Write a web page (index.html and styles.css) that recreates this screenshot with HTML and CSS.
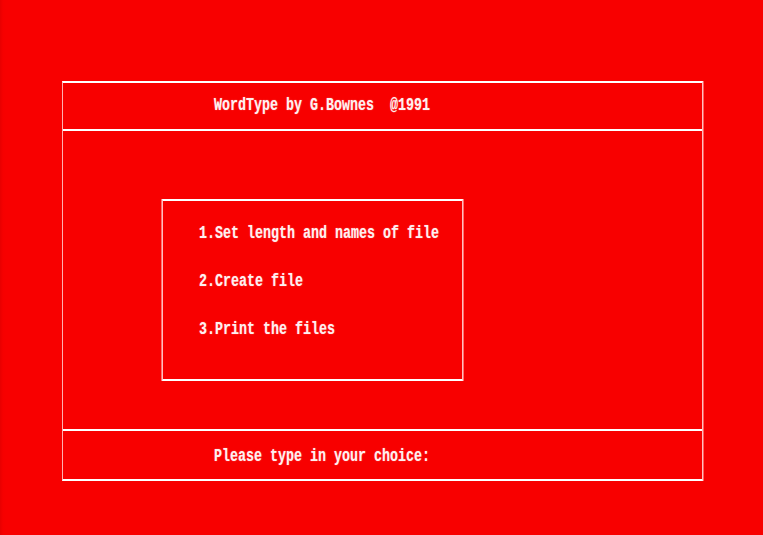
FILE: index.html
```html
<!DOCTYPE html>
<html>
<head>
<meta charset="utf-8">
<link rel="stylesheet" href="styles.css">
</head>
<body>
<div class="screen">
  <div class="frame">
    <div class="header"><span class="txt">WordType by G.Bownes  @1991</span></div>
    <div class="middle">
      <div class="menu">
        <div class="item"><span class="txt">1.Set length and names of file</span></div>
        <div class="item"><span class="txt">2.Create file</span></div>
        <div class="item"><span class="txt">3.Print the files</span></div>
      </div>
    </div>
    <div class="footer"><span class="txt">Please type in your choice:</span></div>
  </div>
</div>
</body>
</html>
```

FILE: styles.css
```css
html, body {
  margin: 0;
  padding: 0;
  background: #f80000;
}
.screen {
  width: 763px;
  height: 535px;
  padding-top: 81px;
  padding-left: 62px;
  box-sizing: border-box;
  background: linear-gradient(to right, #e80000 0, #f60000 3px, #f80000 6px);
}
.frame {
  width: 641px;
  box-sizing: border-box;
  border-top: 2px solid #fff;
  border-bottom: 2px solid #fff;
  border-left: 1px solid #ffb0b0;
  border-right: 1px solid #ffc0c0;
  box-shadow: 1px 0 0 #ff6060;
}
.txt {
  display: inline-block;
  font-family: "Liberation Mono", "DejaVu Sans Mono", monospace;
  font-weight: bold;
  font-size: 13.33px;
  line-height: 14px;
  color: #fff0f0;
  white-space: pre;
  transform: scaleY(1.4);
  text-shadow: 0 0 1px rgba(255,200,200,0.6);
}
.header {
  height: 46px;
  border-bottom: 2px solid #fff;
  display: flex;
  align-items: center;
  padding-left: 151px;
}
.middle {
  height: 298px;
  padding-top: 68px;
  padding-left: 99px;
  box-sizing: border-box;
}
.menu {
  width: 301px;
  height: 182px;
  box-sizing: border-box;
  border-top: 2px solid #fff;
  border-bottom: 2px solid #fff;
  border-left: 1px solid #ffc0c0;
  border-right: 1px solid #ffc0c0;
  box-shadow: -1px 0 0 #ff7070, 1px 0 0 #ff7070;
  padding-top: 26px;
  padding-left: 36px;
  display: flex;
  flex-direction: column;
  gap: 34px;
}
.item {
  height: 14px;
  display: flex;
  align-items: center;
}
.footer {
  height: 44px;
  border-top: 2px solid #fff;
  display: flex;
  align-items: center;
  padding-left: 151px;
  padding-top: 4px;
}
```
